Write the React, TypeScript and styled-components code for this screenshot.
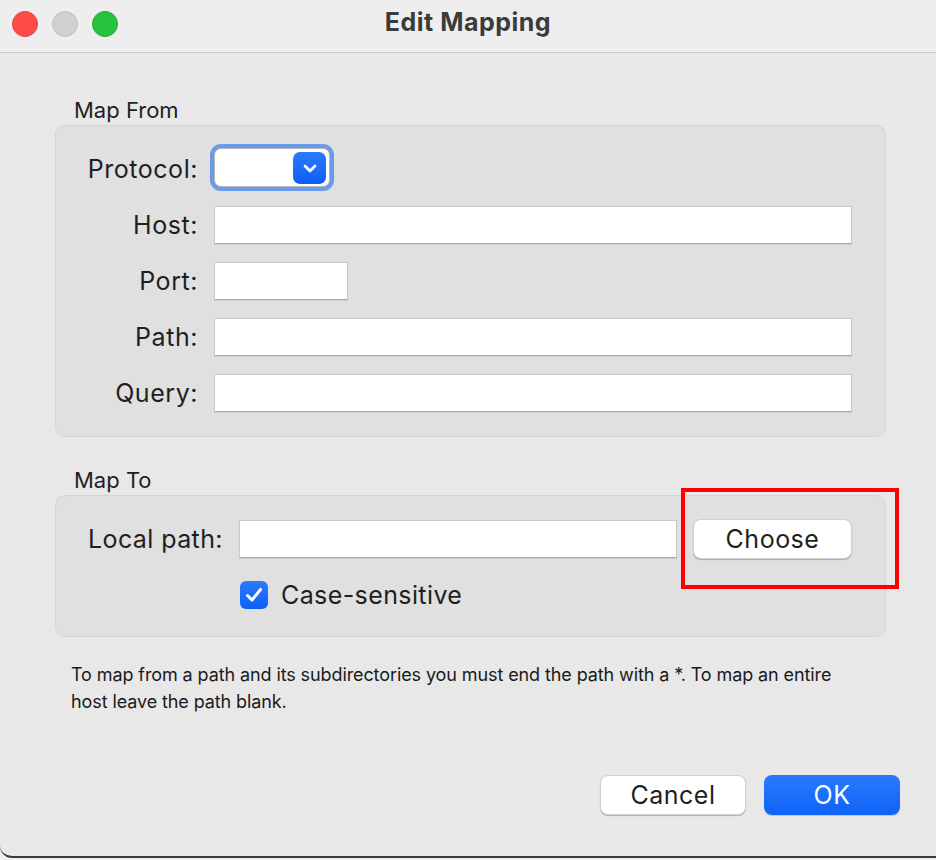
import React from "react";
import styled, { createGlobalStyle } from "styled-components";

const Global = createGlobalStyle`
  html, body { margin: 0; padding: 0; background: #f0f0f0; }
  body { font-family: Inter, "Liberation Sans", Arial, sans-serif; color: #1f1f1f; }
  * { box-sizing: border-box; }
`;

const Window = styled.div`
  width: 936px;
  height: 858px;
  background: #e8e8e8;
  border-bottom-left-radius: 12px;
  border-bottom: 2px solid #3a3a3a;
  display: flex;
  flex-direction: column;
  overflow: hidden;
`;

const TitleBar = styled.div`
  height: 53px;
  flex: none;
  background: #eeeeee;
  border-bottom: 1px solid #c9c9c9;
  display: flex;
  align-items: center;
  position: relative;
`;

const Lights = styled.div`
  display: flex;
  gap: 14px;
  padding-left: 12px;
  margin-top: -4px;
`;

const Light = styled.span<{ $c: string; $b: string }>`
  width: 26px;
  height: 26px;
  border-radius: 50%;
  background: ${(p) => p.$c};
  border: 1px solid ${(p) => p.$b};
`;

const Title = styled.div`
  position: absolute;
  left: 0;
  right: 0;
  top: 7px;
  text-align: center;
  font-size: 25px;
  letter-spacing: 0.5px;
  font-weight: 700;
  color: #3b3b3b;
  pointer-events: none;
`;

const Body = styled.div`
  padding: 45px 36px 0 55px;
  display: flex;
  flex-direction: column;
  flex: 1;
`;

const GroupLabel = styled.div<{ $mt?: number }>`
  font-size: 22px;
  line-height: 25px;
  padding-left: 19px;
  margin-top: ${(p) => p.$mt ?? 0}px;
  margin-bottom: 2px;
  color: #1f1f1f;
`;

const Group = styled.div<{ $pt: number; $pb: number }>`
  width: 831px;
  background: #e0e0e0;
  border: 1px solid #d5d5d5;
  border-radius: 10px;
  padding: ${(p) => p.$pt}px 33px ${(p) => p.$pb}px 20px;
`;

const FormGrid = styled.div`
  display: grid;
  grid-template-columns: 122px 1fr;
  column-gap: 16px;
  row-gap: 18px;
  align-items: center;
`;

const Label = styled.label`
  font-size: 25px;
  letter-spacing: 0.55px;
  line-height: 30px;
  text-align: right;
  color: #1f1f1f;
  white-space: nowrap;
`;

const TextInput = styled.div<{ $w?: number }>`
  height: 38px;
  width: ${(p) => (p.$w ? `${p.$w}px` : "100%")};
  background: #ffffff;
  border: 1px solid #c8c8c8;
  border-bottom-color: #a9a9a9;
  box-shadow: 0 1px 0 rgba(0, 0, 0, 0.08);
`;

const Select = styled.div`
  width: 116px;
  height: 39px;
  margin-top: -2px;
  margin-bottom: 1px;
  background: #ffffff;
  border-radius: 7px;
  border: 1px solid #b8b8b8;
  box-shadow: 0 0 0 4px #6a9aea;
  display: flex;
  justify-content: flex-end;
  align-items: center;
  padding-right: 3px;
`;

const SelectButton = styled.div`
  width: 33px;
  height: 32px;
  border-radius: 7px;
  background: linear-gradient(#2b7bff, #0b5ff6);
  display: flex;
  align-items: center;
  justify-content: center;
`;

const ToRow = styled.div`
  display: flex;
  align-items: center;
  padding-left: 12px;
`;

const ToLabel = styled(Label)`
  width: 151px;
  text-align: left;
  letter-spacing: 0.4px;
`;

const PushButton = styled.button<{ $w: number; $primary?: boolean }>`
  width: ${(p) => p.$w}px;
  height: 40px;
  border-radius: 8px;
  font-family: Inter, "Liberation Sans", Arial, sans-serif;
  font-size: 25px;
  letter-spacing: 0.5px;
  color: ${(p) => (p.$primary ? "#ffffff" : "#1f1f1f")};
  background: ${(p) => (p.$primary ? "linear-gradient(#2a7afc, #0d63f6)" : "#ffffff")};
  border: ${(p) => (p.$primary ? "none" : "1px solid #d0d0d0")};
  box-shadow: ${(p) => (p.$primary ? "0 1px 1px rgba(0,0,0,0.15)" : "0 1px 1px rgba(0,0,0,0.25)")};
  padding: 0;
`;

const ChooseWrap = styled.div`
  position: relative;
  margin-left: 16px;
`;

const Highlight = styled.div`
  position: absolute;
  left: -12px;
  top: -31px;
  width: 218px;
  height: 101px;
  border: 4px solid #ff0000;
  pointer-events: none;
`;

const CheckRow = styled.div`
  display: flex;
  align-items: center;
  gap: 13px;
  margin-top: 21px;
  padding-left: 164px;
`;

const CheckBox = styled.div`
  width: 28px;
  height: 28px;
  border-radius: 6px;
  background: linear-gradient(#2b7bff, #0b5ff6);
  display: flex;
  align-items: center;
  justify-content: center;
`;

const CheckText = styled.span`
  font-size: 25px;
  letter-spacing: 0.4px;
  line-height: 30px;
  color: #1f1f1f;
`;

const Note = styled.p`
  margin: 24px 0 0 16px;
  font-size: 18px;
  line-height: 27px;
  letter-spacing: -0.1px;
  color: #1a1a1a;
  width: 790px;
`;

const Footer = styled.div`
  display: flex;
  justify-content: flex-end;
  gap: 18px;
  margin-top: 60px;
`;

export default function App() {
  return (
    <>
      <Global />
      <Window>
        <TitleBar>
          <Lights>
            <Light $c="#fe4d48" $b="#e2423e" />
            <Light $c="#d0d0d0" $b="#bdbdbd" />
            <Light $c="#27c23b" $b="#1faa31" />
          </Lights>
          <Title>Edit Mapping</Title>
        </TitleBar>
        <Body>
          <GroupLabel>Map From</GroupLabel>
          <Group $pt={24} $pb={24}>
            <FormGrid>
              <Label>Protocol:</Label>
              <Select>
                <SelectButton>
                  <svg width="18" height="14" viewBox="0 0 18 14">
                    <path d="M4 5 L9 10 L14 5" fill="none" stroke="#fff" strokeWidth="2.8" strokeLinecap="round" strokeLinejoin="round" />
                  </svg>
                </SelectButton>
              </Select>
              <Label>Host:</Label>
              <TextInput />
              <Label>Port:</Label>
              <TextInput $w={134} />
              <Label>Path:</Label>
              <TextInput />
              <Label>Query:</Label>
              <TextInput />
            </FormGrid>
          </Group>
          <GroupLabel $mt={31}>Map To</GroupLabel>
          <Group $pt={23} $pb={26}>
            <ToRow>
              <ToLabel>Local path:</ToLabel>
              <TextInput $w={439} />
              <ChooseWrap>
                <PushButton $w={159}>Choose</PushButton>
                <Highlight />
              </ChooseWrap>
            </ToRow>
            <CheckRow>
              <CheckBox>
                <svg width="20" height="18" viewBox="0 0 20 18">
                  <path d="M3.5 9.5 L8 14 L16.5 3.5" fill="none" stroke="#fff" strokeWidth="3" strokeLinecap="round" strokeLinejoin="round" />
                </svg>
              </CheckBox>
              <CheckText>Case-sensitive</CheckText>
            </CheckRow>
          </Group>
          <Note>
            To map from a path and its subdirectories you must end the path with a *. To map an entire host leave the path blank.
          </Note>
          <Footer>
            <PushButton $w={146}>Cancel</PushButton>
            <PushButton $w={136} $primary>OK</PushButton>
          </Footer>
        </Body>
      </Window>
    </>
  );
}
